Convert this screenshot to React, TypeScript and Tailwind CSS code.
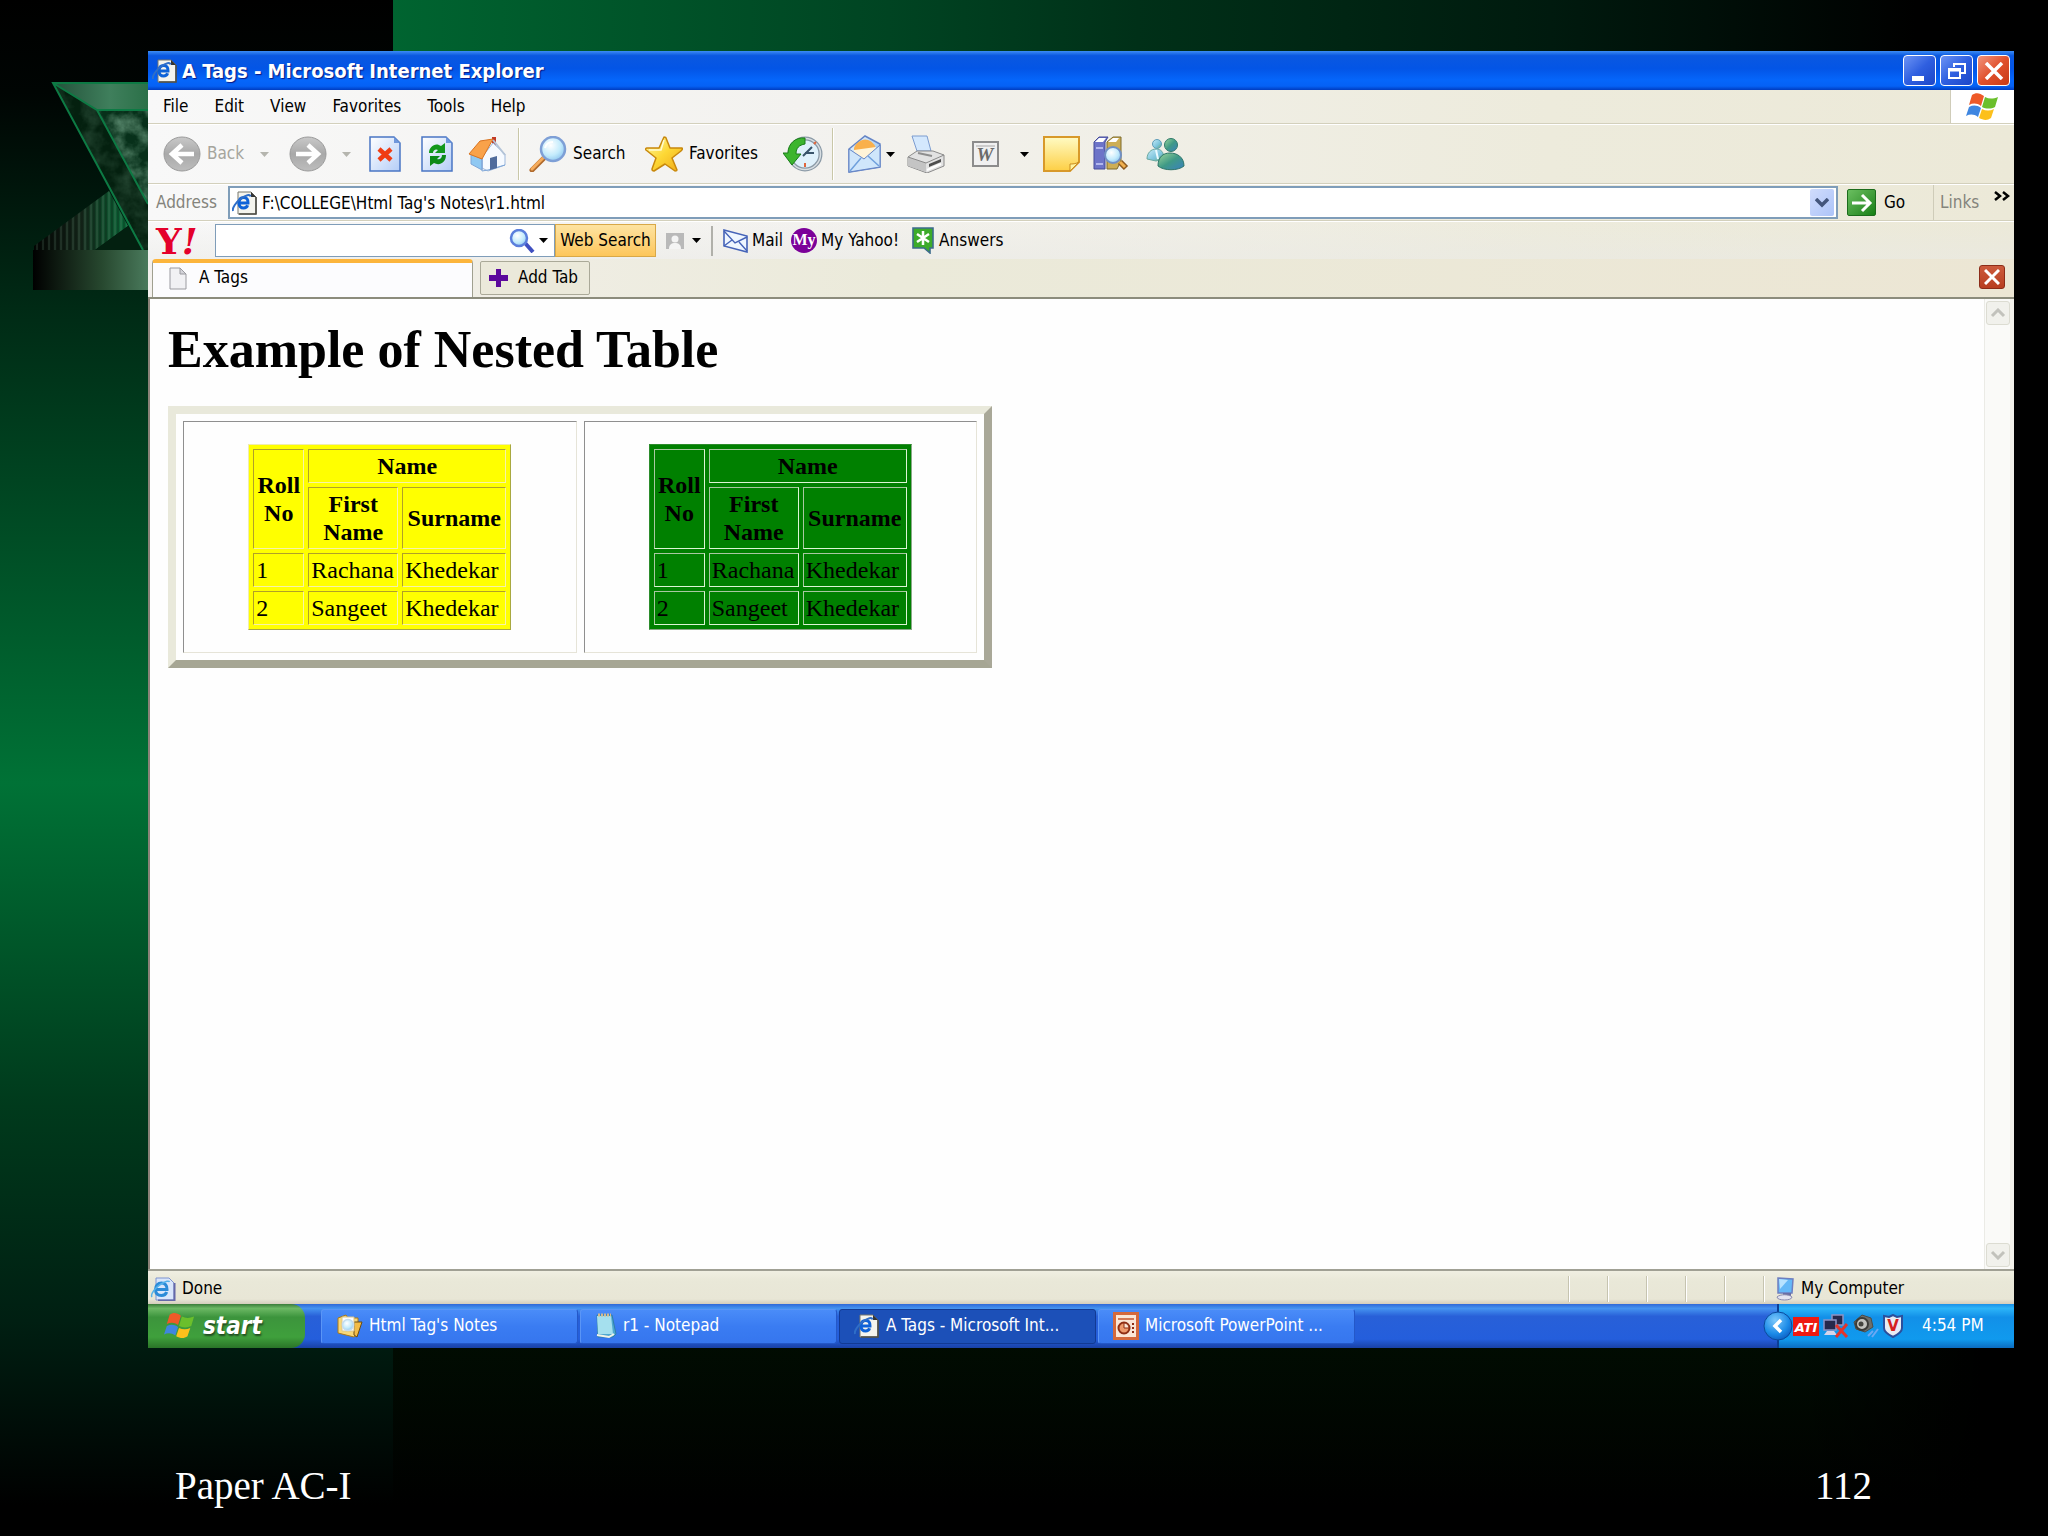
import type { ReactNode } from "react";

const ui = "font-['DejaVu_Sans_Condensed','DejaVu_Sans',sans-serif]";

/* Gradients shared by the icons */
const Defs = () => (
  <svg width="0" height="0" className="absolute" aria-hidden="true">
    <defs>
      <linearGradient id="gray" x1="0" y1="0" x2="0" y2="1">
        <stop offset="0" stopColor="#c9c9c9" />
        <stop offset="0.5" stopColor="#a9a9a9" />
        <stop offset="1" stopColor="#bdbdbd" />
      </linearGradient>
      <linearGradient id="page" x1="0" y1="0" x2="1" y2="1">
        <stop offset="0" stopColor="#ffffff" />
        <stop offset="1" stopColor="#b4cdf7" />
      </linearGradient>
      <radialGradient id="lens" cx="0.4" cy="0.35" r="0.7">
        <stop offset="0" stopColor="#ffffff" />
        <stop offset="0.6" stopColor="#c3ebfc" />
        <stop offset="1" stopColor="#8cc4ee" />
      </radialGradient>
      <linearGradient id="gold" x1="0" y1="0" x2="1" y2="1">
        <stop offset="0" stopColor="#fff9b0" />
        <stop offset="0.5" stopColor="#fdd835" />
        <stop offset="1" stopColor="#f0a818" />
      </linearGradient>
      <linearGradient id="sky" x1="0" y1="0" x2="1" y2="1">
        <stop offset="0" stopColor="#f2faff" />
        <stop offset="1" stopColor="#7db4ea" />
      </linearGradient>
      <linearGradient id="teal" x1="0" y1="0" x2="1" y2="1">
        <stop offset="0" stopColor="#9ed69a" />
        <stop offset="0.5" stopColor="#3f9a86" />
        <stop offset="1" stopColor="#3a7fc0" />
      </linearGradient>
      <linearGradient id="aqua" x1="0" y1="0" x2="1" y2="1">
        <stop offset="0" stopColor="#c8ecf8" />
        <stop offset="0.6" stopColor="#7cc4dc" />
        <stop offset="1" stopColor="#6aa86a" />
      </linearGradient>
      <linearGradient id="note" x1="0" y1="0" x2="0" y2="1">
        <stop offset="0" stopColor="#fffbc4" />
        <stop offset="1" stopColor="#fdcf45" />
      </linearGradient>
      <radialGradient id="tray" cx="0.4" cy="0.3" r="0.8">
        <stop offset="0" stopColor="#7cc8fb" />
        <stop offset="0.6" stopColor="#1b8be8" />
        <stop offset="1" stopColor="#0b53b8" />
      </radialGradient>
    </defs>
  </svg>
);

const Svg = ({ w, h, box, children }: { w: number; h: number; box?: string; children: ReactNode }) => (
  <svg width={w} height={h} viewBox={box ?? `0 0 ${w} ${h}`} fill="none" className="shrink-0" aria-hidden="true">
    {children}
  </svg>
);

const IePage = () => (
  <Svg w={26} h={24}>
    <path d="M6 1h13l5 5v17H6z" fill="#f4f4ee" stroke="#77776c" />
    <path d="M24 6v17H7" stroke="#4d4d46" strokeWidth="1.6" />
    <path d="M19 1v5h5z" fill="#333" />
    <path d="M16 12H7c0-3.500 2-5.500 4.800-5.500S16.200 8.500 16 12zM7 12c0 3 1.800 5 4.600 5 2 0 3.400-1 4-2.800" stroke="#0d62d8" strokeWidth="3" />
    <path d="M1 20C0 17 4 11 9 7.500S18 3 18.500 5.500" stroke="#2f6ec8" strokeWidth="2" />
  </Svg>
);

const IeStatus = () => (
  <Svg w={26} h={24}>
    <path d="M6 1h13l5 5v17H6z" fill="#d9e6fb" stroke="#7f94d0" />
    <path d="M24.500 6v17.500H8" stroke="#6568a8" strokeWidth="2" />
    <path d="M17 12.500H5.500c0-4 2.500-6.500 6-6.500s5.700 2.700 5.500 6.500zM5.500 12.500c0 4 2.500 6 6 6 2.500 0 4.400-1.200 5.200-3.500" stroke="#2b8bd8" strokeWidth="3" />
    <path d="M2 20c-2-3 4-10 9-13s8-3.500 8.500-2" stroke="#53b2ea" strokeWidth="1.500" />
  </Svg>
);

const NavArrow = ({ back }: { back?: boolean }) => (
  <Svg w={38} h={36}>
    <ellipse cx="19" cy="18" rx="18" ry="17" fill="url(#gray)" stroke="#9b9b9b" />
    <path
      d={back ? "M31 18H10M19 9l-10 9 10 9" : "M7 18h21M19 9l10 9-10 9"}
      stroke="#fff"
      strokeWidth="4.500"
    />
  </Svg>
);

const Stop = () => (
  <Svg w={32} h={36}>
    <path d="M1 1h24l6 6v28H1z" fill="url(#page)" stroke="#4a76c4" strokeWidth="1.500" />
    <path d="M25 1v6h6z" fill="#6f97dc" />
    <path d="M10 13l12 11M22 13L10 24" stroke="#f03c12" strokeWidth="4.500" />
  </Svg>
);

const Refresh = () => (
  <Svg w={32} h={36}>
    <path d="M1 1h24l6 6v28H1z" fill="url(#page)" stroke="#4a76c4" strokeWidth="1.500" />
    <path d="M25 1v6h6z" fill="#6f97dc" />
    <path d="M8 17c0-7 7-11 12-7l4-3v10H14l3-3c-2-1.500-5 0-5 3z" fill="#12981c" />
    <path d="M25 19c0 8-7 11-12 8l-4 3V20h10l-3 3c3 1 5-1 5-4z" fill="#0c8a18" />
  </Svg>
);

const Home = () => (
  <Svg w={38} h={36}>
    <path d="M24 1h4v10h-4z" fill="#c23a26" />
    <path d="M14 21L25 7l12 11v11l-17 6-6-3z" fill="#f6faff" stroke="#9db8dc" />
    <path d="M3 18l11 5v11L3 28z" fill="#8fc8f2" stroke="#7ea6d8" />
    <path d="M14 22v13l6-1 17-5" stroke="#7ea6d8" />
    <path d="M1 18L12 5l13-2-11 20z" fill="#f9a24a" stroke="#d97320" />
    <path d="M25 4l12 15" stroke="#b4c4d8" strokeWidth="2" />
    <path d="M22 22l7-2v12l-7 2z" fill="#506c9c" />
  </Svg>
);

const Magnifier = () => (
  <Svg w={38} h={36}>
    <path d="M15 22L3 34" stroke="#b06a2c" strokeWidth="5" strokeLinecap="round" />
    <path d="M15 21L3 33" stroke="#f6ac5c" strokeWidth="3" strokeLinecap="round" />
    <circle cx="24" cy="13" r="12" fill="url(#lens)" stroke="#7e9fd6" strokeWidth="2.500" />
    <path d="M16 12c1-4 4-6 8-6" stroke="#fff" strokeWidth="2" />
  </Svg>
);

const Star = () => (
  <Svg w={38} h={36}>
    <path
      d="M19 1c1 0 2 0 2 1l4 10 12 0c1 1 0 2-1 3l-9 7 5 12c0 1-1 1-2 1l-10-7-11 7c-2 0-2-1-2-2l4-11L1 14c-1-1 0-2 1-2h12z"
      fill="url(#gold)"
      stroke="#c8880c"
      strokeWidth="1.500"
      strokeLinejoin="round"
    />
    <path d="M19 4l-3 10-12 0" stroke="#fffbd0" strokeWidth="1.500" />
  </Svg>
);

const History = () => (
  <Svg w={40} h={36}>
    <circle cx="22" cy="18" r="15.500" fill="#dff1fb" stroke="#8b9aa6" strokeWidth="4" />
    <circle cx="22" cy="18" r="15.500" stroke="#d8dee2" strokeWidth="1.500" />
    <path d="M20 20l9-9M22 17h9" stroke="#39546a" strokeWidth="2" />
    <path d="M22 27v4M31 8l2-2" stroke="#e0663c" strokeWidth="2" />
    <path d="M22 2C12 1 5 8 5 17H0l9 12 9-11h-5c0-6 3-9 9-10z" fill="#3cb52e" stroke="#1a7d18" />
  </Svg>
);

const MailOpen = () => (
  <Svg w={34} h={38}>
    <path d="M1 14L17 1l15 8v23L1 37z" fill="url(#sky)" stroke="#6585c6" strokeWidth="1.500" />
    <path d="M6 13c2-6 9-10 14-8s8 6 8 10l-10 4L6 17z" fill="#f9b04c" />
    <path d="M6 15l22-3v7l-12 5-10-5z" fill="#fff4d8" />
    <path d="M1 14l15 10 16-14v22L1 37z" fill="#cfe6fb" stroke="#6585c6" />
    <path d="M2 36l11-13M31 31L20 21" stroke="#6fa0dc" strokeWidth="1.500" />
  </Svg>
);

const Printer = () => (
  <Svg w={38} h={38}>
    <path d="M5 1h15l4 15H10z" fill="#d4e8fd" stroke="#7c9cd0" />
    <path d="M1 22l9-6h16l11 4v11l-17 7L1 31z" fill="#e2e2e2" stroke="#8a8a8a" />
    <path d="M1 22l18 6v9L1 31z" fill="#c4c4c4" />
    <path d="M1 22l18 6 18-8" stroke="#8a8a8a" />
    <path d="M22 29l12-5v3l-12 5z" fill="#4d4d4d" />
    <path d="M20 35l14-6" stroke="#fff" strokeWidth="2" />
    <path d="M11 18l14 3" stroke="#8e8e8e" strokeWidth="2" />
  </Svg>
);

const Word = () => (
  <Svg w={27} h={26}>
    <rect x="1" y="1" width="25" height="24" fill="#f0f0f0" stroke="#8c8c8c" strokeWidth="2" />
    <path d="M4 4h19v2H4z" fill="#ccc" />
    <text x="13" y="20" textAnchor="middle" fontFamily="Liberation Serif" fontWeight="bold" fontStyle="italic" fontSize="19" fill="#6b6b6b">W</text>
  </Svg>
);

const Note = () => (
  <Svg w={37} h={36}>
    <path d="M1 1h35v25l-9 9H1z" fill="url(#note)" stroke="#d8992a" strokeWidth="2" />
    <path d="M27 35v-7c2 0 6 0 9-2z" fill="#fff3a0" stroke="#c98c20" />
  </Svg>
);

const Books = () => (
  <Svg w={36} h={36}>
    <path d="M1 6l5-5h9l-3 5v27H1z" fill="#6d74c8" stroke="#444a98" />
    <path d="M14 6l6-5h8v24l-4 8H14z" fill="#cdae55" stroke="#7d6a2c" />
    <path d="M2 6l4-4h7l-3 4zM15 6l5-4h6l-3 4z" fill="#fff" />
    <path d="M3 12h7M3 28h7" stroke="#b3b8ee" strokeWidth="2" />
    <path d="M27 26l6 6" stroke="#8c5a20" strokeWidth="6" />
    <path d="M27 26l5 5" stroke="#f0b050" strokeWidth="3" />
    <circle cx="20" cy="19" r="8" fill="url(#lens)" stroke="#7190c4" strokeWidth="2" />
  </Svg>
);

const Messenger = () => (
  <Svg w={39} h={34}>
    <circle cx="11" cy="7" r="4.500" fill="url(#aqua)" stroke="#5f9db8" />
    <path d="M1 22c0-6 4-10 9-10s8 3 8 10l-8 2z" fill="url(#aqua)" stroke="#6aa9a0" />
    <path d="M10 13l2 9" stroke="#eafaff" strokeWidth="2" />
    <circle cx="25" cy="8" r="6.500" fill="url(#teal)" stroke="#2f7a6a" />
    <path d="M12 29c0-9 5-13 12-13s14 4 14 13c-6 5-20 5-26 0z" fill="url(#teal)" stroke="#2c7468" />
  </Svg>
);

const Flag = ({ w, h }: { w: number; h: number }) => (
  <Svg w={w} h={h} box="0 0 33 28">
    <path d="M6 2c4-3 8-2 12 1l-3 10c-4-3-8-3-12-1z" fill="#ee5a28" />
    <path d="M19 4c4 2 8 2 13 0l-3 10c-4 2-9 2-13 0z" fill="#6bbf2c" />
    <path d="M3 14c4-2 8-2 12 1l-3 9c-4-3-8-3-12-1z" fill="#3f86e0" />
    <path d="M16 16c4 2 8 2 12 0l-3 9c-4 3-8 2-12 0z" fill="#fcc01c" />
  </Svg>
);

const SmallLens = () => (
  <Svg w={26} h={24}>
    <path d="M16 14l8 9" stroke="#3f4fc0" strokeWidth="4" />
    <circle cx="10" cy="9" r="8" fill="url(#lens)" stroke="#5b7fdc" strokeWidth="2.500" />
  </Svg>
);

const Caret = ({ color = "#000" }: { color?: string }) => (
  <Svg w={9} h={5}>
    <path d="M0 0h9L4.500 5z" fill={color} />
  </Svg>
);

const Avatar = () => (
  <Svg w={18} h={16}>
    <rect width="18" height="16" fill="#b9b9b9" />
    <circle cx="9" cy="6" r="3.500" fill="#f4f4f4" />
    <path d="M3 16c0-5 3-6 6-6s6 1 6 6z" fill="#f4f4f4" />
  </Svg>
);

const MailClosed = () => (
  <Svg w={25} h={24}>
    <path d="M1 1l23 6v16L1 17z" fill="#eef6ff" stroke="#4563b8" strokeWidth="1.600" />
    <path d="M1 2l11 12L24 8M1 17l8-6M24 22l-8-9" stroke="#4563b8" strokeWidth="1.400" />
  </Svg>
);

const MyBadge = () => (
  <Svg w={26} h={25}>
    <ellipse cx="13" cy="12.500" rx="13" ry="12.500" fill="#7b0099" />
    <text x="13" y="17" textAnchor="middle" fontFamily="Liberation Serif" fontWeight="bold" fontSize="16" fill="#fff">My</text>
  </Svg>
);

const AnswersIcon = () => (
  <Svg w={24} h={27}>
    <path d="M2 1h20v20h-3v5l-6-5H2z" fill="#3cab2a" stroke="#3c6b8c" strokeWidth="1.600" />
    <path d="M12 4v14M6 7l12 8M18 7L6 15" stroke="#fff" strokeWidth="2.500" />
  </Svg>
);

const BlankPage = () => (
  <Svg w={18} h={23}>
    <path d="M1 1h10l6 6v15H1z" fill="#f1f1f4" stroke="#9a9aa0" />
    <path d="M11 1v6h6z" fill="#d4d4da" stroke="#9a9aa0" />
  </Svg>
);

const Folder = () => (
  <Svg w={27} h={26}>
    <path d="M2 5l8-3 2 3h10v16l-4 3L2 20z" fill="#f8d778" stroke="#a87818" />
    <path d="M18 9h8l-5 15-3-2z" fill="#f3bc48" stroke="#6c4c10" />
    <path d="M6 4h12v14H6z" fill="#fff" stroke="#d8c48c" />
    <circle cx="12" cy="12" r="5.500" fill="url(#lens)" stroke="#c4dcf0" strokeWidth="1.500" />
  </Svg>
);

const Notepad = () => (
  <Svg w={22} h={26}>
    <path d="M2 2h15l4 19-3 3H3z" fill="#4fa8d0" stroke="#2f7fa8" />
    <path d="M2 3h14l2 18H3z" fill="#a5e0ee" />
    <path d="M3 2h13" stroke="#d6b98c" strokeWidth="3" strokeDasharray="2 1" />
    <path d="M2 22l12 2 5-3" stroke="#f2f2e6" strokeWidth="2" />
  </Svg>
);

const PowerPoint = () => (
  <Svg w={26} h={28}>
    <rect x="1" y="1" width="24" height="26" fill="#fbe6d6" stroke="#d4693c" strokeWidth="4" />
    <path d="M5 7h16" stroke="#c4532a" strokeWidth="1.500" />
    <circle cx="11" cy="16" r="5.500" fill="#ee9a6c" stroke="#8e2e14" strokeWidth="2" />
    <path d="M11 16v-5a5 5 0 0 1 5 5z" fill="#fbe6d6" stroke="#8e2e14" />
    <path d="M20 11v10" stroke="#8e2e14" strokeWidth="2" strokeDasharray="2 2" />
  </Svg>
);

const Computer = () => (
  <Svg w={20} h={24}>
    <path d="M3 1l15 1-1 14H3z" fill="#64b8f8" stroke="#6d7fc0" strokeWidth="1.500" />
    <path d="M4 2l9 1-8 9z" fill="#b8e2ff" />
    <path d="M8 16h8v3H8z" fill="#6a6ea4" />
    <path d="M2 20c3-3 12-3 15 0 0 4-15 4-15 0z" fill="#e4e4f0" stroke="#8a8aae" />
  </Svg>
);

const AtiIcon = () => (
  <Svg w={26} h={19}>
    <rect width="26" height="19" fill="#ee1a10" />
    <text x="13" y="15" textAnchor="middle" fontFamily="DejaVu Sans" fontWeight="bold" fontStyle="italic" fontSize="13" fill="#fff">ATI</text>
  </Svg>
);

const Network = () => (
  <Svg w={28} h={24}>
    <rect x="10" y="1" width="11" height="10" fill="#26284c" stroke="#8f93c4" strokeWidth="1.500" />
    <rect x="2" y="6" width="12" height="10" fill="#26284c" stroke="#8f93c4" strokeWidth="1.500" />
    <path d="M2 21l3-4h7l3 4z" fill="#d4d4ea" />
    <path d="M14 11l11 12M25 10L14 23" stroke="#e2342c" strokeWidth="3" />
  </Svg>
);

const Speaker = () => (
  <Svg w={27} h={24}>
    <path d="M1 8l8-7 9 3 2 9-8 5-9-3z" fill="#6f6f6a" stroke="#4c4c48" />
    <circle cx="9" cy="10" r="6" fill="#c4c4be" stroke="#3c3c38" strokeWidth="2" />
    <circle cx="8" cy="10" r="2.500" fill="#44443e" />
    <path d="M15 22l5-5M19 23l6-8" stroke="#6aa8f4" strokeWidth="2" />
  </Svg>
);

const Shield = () => (
  <Svg w={20} h={24}>
    <path d="M1 2l5 1 4-2 4 2 5-1v12c0 4-5 7-9 9-4-2-9-5-9-9z" fill="#e8ecf4" stroke="#2b4f9c" strokeWidth="2" />
    <text x="10" y="17" textAnchor="middle" fontFamily="DejaVu Sans" fontWeight="bold" fontSize="15" fill="#d42020">V</text>
  </Svg>
);

/* Slide artwork behind the browser window */
const SlideArt = () => (
  <svg width="148" height="300" viewBox="0 0 148 300" className="absolute top-0 left-0" aria-hidden="true">
    <defs>
      <linearGradient id="bar" x1="0" x2="1">
        <stop offset="0" stopColor="#000" />
        <stop offset="0.6" stopColor="#27482f" />
        <stop offset="1" stopColor="#4a7a5c" />
      </linearGradient>
      <linearGradient id="strip" x1="0" x2="1">
        <stop offset="0" stopColor="#020503" />
        <stop offset="0.5" stopColor="#16291c" />
        <stop offset="1" stopColor="#0c6b3a" />
      </linearGradient>
      <linearGradient id="rim" x1="0" x2="1">
        <stop offset="0" stopColor="#23513a" />
        <stop offset="0.600" stopColor="#3f7f5c" />
        <stop offset="1" stopColor="#2b7048" />
      </linearGradient>
      <pattern id="lines" width="6" height="10" patternUnits="userSpaceOnUse">
        <path d="M1 0v10" stroke="#6f9a80" strokeWidth="1" opacity="0.350" />
        <path d="M4 0v10" stroke="#000" strokeWidth="1" opacity="0.400" />
      </pattern>
      <filter id="marble" x="0" y="0" width="1" height="1">
        <feTurbulence type="fractalNoise" baseFrequency="0.06" numOctaves="4" seed="8" />
        <feColorMatrix values="0 0 0 0 0.200  0 0 0 0 0.420  0 0 0 0 0.280  1.800 0 0 0 -0.600" />
        <feComposite in2="SourceGraphic" operator="in" />
      </filter>
    </defs>
    <path d="M34 246l75-55 19 35-33 24H34z" fill="url(#strip)" />
    <path d="M34 246l75-55 19 35-33 24H34z" fill="url(#lines)" />
    <path d="M95 250l33-24 15 24z" fill="#032010" />
    <path d="M53 83h95v167h-5z" fill="#04200f" />
    <path d="M97 110h51v94z" fill="#07301a" />
    <path d="M97 110h51v94z" fill="#fff" filter="url(#marble)" opacity="0.700" />
    <path d="M53 83l44 27 51 94v46h-5z" fill="#fff" filter="url(#marble)" opacity="0.250" />
    <path d="M53 83h95v27H97z" fill="url(#rim)" />
    <path d="M148 83H53l90 167M53 83l44 27h51M97 110l51 94" fill="none" stroke="#0d7a44" strokeWidth="2" />
    <path d="M33 250h115v40H33z" fill="url(#bar)" />
  </svg>
);

const Separator = () => <span className="h-[52px] w-[2px] shrink-0 border-l border-[#c9c7a8] bg-white" />;

const Tool = ({ label, className, children }: { label: string; className: string; children: ReactNode }) => (
  <button type="button" aria-label={label} className={`flex h-full shrink-0 items-center ${className}`}>
    {children}
  </button>
);

const caption = "border border-white rounded-[4px] flex h-[31px] w-[33px] items-center justify-center";

const menus = ["File", "Edit", "View", "Favorites", "Tools", "Help"];

const students = [
  ["1", "Rachana", "Khedekar"],
  ["2", "Sangeet", "Khedekar"],
];

const NestedTable = ({ table, cell }: { table: string; cell: string }) => (
  <table className={`mx-auto w-[263px] table-fixed border-separate border-spacing-[4px] border ${table}`}>
    <colgroup>
      <col className="w-[51px]" />
      <col className="w-[90px]" />
      <col />
    </colgroup>
    <thead>
      <tr>
        <th rowSpan={2} className={`border leading-7 ${cell}`}>Roll No</th>
        <th colSpan={2} className={`h-[34px] border leading-7 ${cell}`}>Name</th>
      </tr>
      <tr>
        <th className={`h-[62px] border leading-7 ${cell}`}>First Name</th>
        <th className={`border leading-7 ${cell}`}>Surname</th>
      </tr>
    </thead>
    <tbody>
      {students.map(([roll, first, last]) => (
        <tr key={roll}>
          <td className={`h-[34px] border px-[2px] leading-7 ${cell}`}>{roll}</td>
          <td className={`border px-[2px] leading-7 ${cell}`}>{first}</td>
          <td className={`border px-[2px] leading-7 ${cell}`}>{last}</td>
        </tr>
      ))}
    </tbody>
  </table>
);

const TitleBar = () => (
  <header className="flex h-[39px] items-center bg-[linear-gradient(to_bottom,#3c8cf4_0%,#0a58e0_12%,#0355e6_45%,#0566fb_75%,#0561f5_90%,#003cc0_100%)] pl-1 pr-1">
    <IePage />
    <h2 className="ml-1 flex-1 text-[20px] font-bold text-white [text-shadow:1px_1px_1px_#0a1883]">
      A Tags - Microsoft Internet Explorer
    </h2>
    <div className="flex gap-1">
      <button type="button" aria-label="Minimize" className={`${caption} bg-linear-to-br from-[#6d93f4] via-[#2f5fe0] to-[#1c46c8]`}>
        <Svg w={24} h={24}><path d="M4 17h12v5H4z" fill="#fff" /></Svg>
      </button>
      <button type="button" aria-label="Restore" className={`${caption} bg-linear-to-br from-[#6d93f4] via-[#2f5fe0] to-[#1c46c8]`}>
        <Svg w={20} h={18}>
          <path d="M7 5V2h11v9h-4" stroke="#fff" strokeWidth="2" />
          <path d="M2 7h11v9H2zM2 8.500h11" stroke="#fff" strokeWidth="2" />
        </Svg>
      </button>
      <button type="button" aria-label="Close" className={`${caption} bg-linear-to-br from-[#f0937a] via-[#e0502c] to-[#c83a14]`}>
        <Svg w={20} h={18}><path d="M2 1l16 16M18 1L2 17" stroke="#fff" strokeWidth="3.500" /></Svg>
      </button>
    </div>
  </header>
);

const MenuBar = () => (
  <nav className="flex h-[34px] items-stretch border-b border-[#d3d0bc]">
    <ul className="flex flex-1 items-center gap-[26px] pl-[15px]">
      {menus.map((m) => (
        <li key={m}><button type="button">{m}</button></li>
      ))}
    </ul>
    <div className="flex w-[64px] items-center justify-center border-l border-[#cfccb9] bg-white">
      <Flag w={33} h={28} />
    </div>
  </nav>
);

const Toolbar = () => (
  <div className="flex h-[60px] items-center border-t border-b border-t-white border-b-[#d3d0bc] pl-3">
    <Tool label="Back" className="w-[92px] gap-[6px] pl-[3px] text-[#a5a59d]"><NavArrow back /><span>Back</span></Tool>
    <Tool label="Back history" className="w-6 justify-center"><Caret color="#b5b5ae" /></Tool>
    <Tool label="Forward" className="w-16 justify-center"><NavArrow /></Tool>
    <Tool label="Forward history" className="w-3 justify-center"><Caret color="#b5b5ae" /></Tool>
    <Tool label="Stop" className="w-[66px] justify-center"><Stop /></Tool>
    <Tool label="Refresh" className="w-[38px] justify-center"><Refresh /></Tool>
    <Tool label="Home" className="w-[62px] justify-center"><Home /></Tool>
    <Separator />
    <Tool label="Search" className="w-[116px] gap-[6px] pl-[9px]"><Magnifier /><span>Search</span></Tool>
    <Tool label="Favorites" className="w-[138px] gap-[6px] pl-[9px]"><Star /><span>Favorites</span></Tool>
    <Tool label="History" className="w-[58px] justify-center"><History /></Tool>
    <Separator />
    <Tool label="Mail" className="w-12 justify-end"><MailOpen /></Tool>
    <Tool label="Mail options" className="w-4 justify-center"><Caret /></Tool>
    <Tool label="Print" className="w-14 justify-center"><Printer /></Tool>
    <Tool label="Edit" className="w-[62px] justify-center"><Word /></Tool>
    <Tool label="Edit options" className="w-4 justify-center"><Caret /></Tool>
    <Tool label="Discuss" className="w-[58px] justify-center"><Note /></Tool>
    <Tool label="Research" className="w-[42px] justify-center"><Books /></Tool>
    <Tool label="Messenger" className="w-[66px] justify-center"><Messenger /></Tool>
  </div>
);

const AddressBar = () => (
  <div className="flex h-[37px] items-center border-t border-b border-t-white border-b-[#d3d0bc]">
    <label htmlFor="address" className="w-[80px] pl-2 text-[#84847c]">Address</label>
    <div className="flex h-[33px] flex-1 items-center border-2 border-[#7f9db9] bg-white pr-[2px] pl-[2px]">
      <IePage />
      <input
        id="address"
        defaultValue="F:\COLLEGE\Html Tag's Notes\r1.html"
        className="h-full flex-1 bg-transparent pl-1 outline-none"
      />
      <button type="button" aria-label="Show addresses" className="flex h-[27px] w-6 items-center justify-center rounded-[2px] bg-linear-to-br from-[#d0dcfc] to-[#adc4f8]">
        <Svg w={14} h={10}><path d="M1 1l6 6 6-6" stroke="#44567c" strokeWidth="3.500" /></Svg>
      </button>
    </div>
    <button type="button" className="flex w-[95px] items-center gap-2 pl-[9px]">
      <span className="flex h-[27px] w-[29px] items-center justify-center rounded-[2px] border border-[#1c6c1c] bg-linear-to-br from-[#6abf60] to-[#128012]">
        <Svg w={22} h={20}><path d="M1 10h18M11 2l8 8-8 8" stroke="#fff" strokeWidth="3" /></Svg>
      </span>
      Go
    </button>
    <div className="flex h-full w-[81px] items-start justify-between border-l border-[#cfccb9] pr-1 pl-[6px]">
      <span className="self-center text-[#84847c]">Links</span>
      <button type="button" aria-label="More links" className="pt-[6px]">
        <Svg w={16} h={10}><path d="M1 1l5 4-5 4M9 1l5 4-5 4" stroke="#000" strokeWidth="2.500" /></Svg>
      </button>
    </div>
  </div>
);

const YahooBar = () => (
  <div className="flex h-[38px] items-center border-t border-white bg-[linear-gradient(to_bottom,#f8f8f700,#e9e9e580)] pl-2">
    <div className="w-[59px] font-['DejaVu_Serif',serif] text-[36px] leading-8 font-bold text-[#e4002b]">
      Y<span className="italic">!</span>
    </div>
    <div className="flex h-[33px] w-[340px] items-center gap-1 border border-[#7f9db9] bg-white pr-[6px]">
      <input aria-label="Search the web" className="h-full min-w-0 flex-1 bg-transparent px-2 outline-none" />
      <SmallLens />
      <Caret />
    </div>
    <button type="button" className="h-[33px] w-[101px] border border-[#d8a848] bg-linear-to-b from-[#fde3a0] to-[#fdc65a] whitespace-nowrap">
      Web Search
    </button>
    <button type="button" aria-label="Account" className="flex w-[55px] items-center justify-center gap-2"><Avatar /><Caret /></button>
    <span className="h-[30px] w-[2px] bg-[#b0b0aa]" />
    <nav className="flex items-center gap-2 pl-[10px]">
      <a href="#mail" className="flex items-center gap-1"><MailClosed />Mail</a>
      <a href="#my" className="flex items-center gap-1"><MyBadge />My Yahoo!</a>
      <a href="#answers" className="flex items-center gap-1 pl-1"><AnswersIcon />Answers</a>
    </nav>
  </div>
);

const TabBar = () => (
  <div className="flex h-[40px] items-end border-b-2 border-[#8c8c7c] bg-[linear-gradient(to_right,#f4f1ee,#ebeada_40%,#ece6d4)] pl-1">
    <button type="button" className="flex h-[38px] w-[321px] items-center gap-3 rounded-t-[4px] border border-t-4 border-[#a0a090] border-t-[#fcb53c] border-b-0 bg-[#fcfcfe] pb-1 pl-4">
      <BlankPage />A Tags
    </button>
    <button type="button" className="mb-[2px] ml-[7px] flex h-[34px] w-[110px] items-center gap-[10px] rounded-[2px] border border-[#aaa998] bg-[#ebe9da] pl-2 whitespace-nowrap">
      <Svg w={19} h={18}><path d="M7 0h5v6h7v6h-7v6H7v-6H0V6h7z" fill="#5c0a9c" /></Svg>
      Add Tab
    </button>
    <button type="button" aria-label="Close tab" className="mr-[9px] mb-2 ml-auto flex h-6 w-[26px] items-center justify-center rounded-[3px] border border-[#8c2c18] bg-linear-to-b from-[#cc5a3c] to-[#b83e20]">
      <Svg w={16} h={16}><path d="M1 1l14 14M15 1L1 15" stroke="#fff" strokeWidth="3" /></Svg>
    </button>
  </div>
);

const ScrollButton = ({ label, d }: { label: string; d: string }) => (
  <button type="button" aria-label={label} className="flex h-6 w-6 items-center justify-center rounded-[3px] border border-[#dcdcd2] bg-[#f1f1ec]">
    <Svg w={16} h={10}><path d={d} stroke="#c2c2bc" strokeWidth="3" /></Svg>
  </button>
);

const Page = () => (
  <div className="flex flex-1 border-r-4 border-l-2 border-r-[#f2f1ea] border-l-[#8a8278] bg-[#fefefe]">
    <main className="flex-1 pt-[22px] pl-[18px] font-['Liberation_Serif',serif] text-[24px] text-black">
      <h1 className="text-[52px] leading-[58px] font-bold">Example of Nested Table</h1>
      <table className="mt-[27px] h-[262px] w-[824px] border-separate border-spacing-[7px] border-8 border-t-[#e9e9db] border-r-[#a9a898] border-b-[#a6a694] border-l-[#e9e9db]">
        <tbody>
          <tr>
            <td className="border border-t-[#8f8f8f] border-r-[#e6e4d8] border-b-[#e6e4d8] border-l-[#8f8f8f]">
              <NestedTable
                table="bg-[#ffff00] border-t-[#f0ecb0] border-l-[#f0ecb0] border-r-[#a8a840] border-b-[#a8a840]"
                cell="border-t-[#b0a028] border-l-[#b0a028] border-r-[#f6f2a8] border-b-[#f6f2a8]"
              />
            </td>
            <td className="border border-t-[#8f8f8f] border-r-[#e6e4d8] border-b-[#e6e4d8] border-l-[#8f8f8f]">
              <NestedTable
                table="bg-[#008000] border-t-[#2c8c2c] border-l-[#2c8c2c] border-r-[#8ba888] border-b-[#8ba888]"
                cell="border-t-[#a8c8a0] border-l-[#a8c8a0] border-r-[#dcf5d4] border-b-[#dcf5d4]"
              />
            </td>
          </tr>
        </tbody>
      </table>
    </main>
    <div className="flex w-[26px] flex-col items-center justify-between border-l border-[#ebebe6] bg-[#fafaf8] py-[2px]">
      <ScrollButton label="Scroll up" d="M2 8l6-6 6 6" />
      <ScrollButton label="Scroll down" d="M2 2l6 6 6-6" />
    </div>
  </div>
);

const StatusBar = () => (
  <div className="flex h-[35px] items-center border-t-2 border-[#a0a094] bg-[linear-gradient(to_bottom,#f0efe2,#e9e8d8_30%,#e8e6d6_85%,#d4cdbc)] pt-[2px] pl-[2px]">
    <IeStatus />
    <span className="flex-1 pl-[6px]">Done</span>
    {[0, 1, 2, 3, 4].map((n) => (
      <span key={n} className="h-[26px] w-[39px] border-l border-[#c6c4b0] shadow-[inset_1px_0_0_#fff]" />
    ))}
    <span className="flex h-[26px] w-[251px] items-center gap-[6px] border-l border-[#c6c4b0] pl-[11px] shadow-[inset_1px_0_0_#fff]">
      <Computer />My Computer
    </span>
  </div>
);

const Task = ({ icon, children, active }: { icon: ReactNode; children: ReactNode; active?: boolean }) => (
  <button
    type="button"
    className={`flex h-[35px] w-[257px] items-center gap-[6px] rounded-[3px] border pl-[14px] whitespace-nowrap text-white ${
      active
        ? "border-[#123a94] bg-[#1c50b8]"
        : "border-[#5a95f6] border-r-[#2458c8] border-b-[#2458c8] bg-linear-to-b from-[#4a8cf8] via-[#3a7cf2] to-[#3676ee]"
    }`}
  >
    {icon}
    {children}
  </button>
);

const TaskBar = () => (
  <footer className="flex h-[44px] items-stretch bg-[linear-gradient(to_bottom,#2f68d8_0%,#4593f0_10%,#2860d8_28%,#245edc_80%,#1941a5_100%)]">
    <button
      type="button"
      className="flex w-[157px] items-center gap-2 rounded-r-[14px] bg-[linear-gradient(to_bottom,#3a7c3a_0%,#6cb864_10%,#3c943c_30%,#3fa03c_75%,#2a7428_100%)] pl-4 text-[24px] font-bold text-white italic [text-shadow:1px_2px_2px_#204a20]"
    >
      <Flag w={31} h={28} />start
    </button>
    <div className="flex flex-1 items-center gap-[2px] pl-4">
      <Task icon={<Folder />}>Html Tag's Notes</Task>
      <Task icon={<Notepad />}>r1 - Notepad</Task>
      <Task icon={<IePage />} active>A Tags - Microsoft Int...</Task>
      <Task icon={<PowerPoint />}>Microsoft PowerPoint ...</Task>
    </div>
    <div className="flex w-[237px] items-center border-l-2 border-[#0c3f94] bg-[linear-gradient(to_bottom,#1a90e8_0%,#2cb4f8_10%,#1290e8_30%,#109aee_80%,#0c6cc0_100%)] text-white">
      <button type="button" aria-label="Show hidden icons" className="-ml-4">
        <Svg w={30} h={30}>
          <circle cx="15" cy="15" r="14" fill="url(#tray)" stroke="#0b4a9c" />
          <path d="M18 9l-6 6 6 6" stroke="#fff" strokeWidth="3.500" />
        </Svg>
      </button>
      <div className="flex flex-1 items-center gap-[3px]">
        <AtiIcon /><Network /><Speaker /><Shield />
      </div>
      <time className="w-[92px] whitespace-nowrap">4:54 PM</time>
    </div>
  </footer>
);

const App = () => (
  <div className="relative flex min-h-screen flex-col bg-black pt-[51px]">
    <Defs />
    <div className="absolute inset-0 flex">
      <div className="w-[393px] bg-[linear-gradient(to_bottom,#000_0%,#000503_6%,#002a15_20%,#007236_51%,#003a1c_72%,#001f12_86%,#000_98%)]" />
      <div className="flex flex-1 flex-col">
        <div className="h-[60px] bg-[linear-gradient(to_right,#006430,#004422_30%,#003018_45%,#001a0e_70%,#000_92%)]" />
        <div className="flex-1 bg-[linear-gradient(to_right,transparent_85%,#000_96%),linear-gradient(to_bottom,#010d02_86%,#000_98%)]" />
      </div>
    </div>
    <SlideArt />
    <section className={`relative mr-[34px] ml-[148px] flex flex-1 flex-col bg-[#ece9d8] text-[17px] text-black ${ui}`}>
      <TitleBar />
      <div className="bg-[linear-gradient(to_right,#f8f8f8,#f3f2ef_35%,#edebdc_75%,#ece9d8)]">
        <MenuBar />
        <Toolbar />
        <AddressBar />
        <YahooBar />
        <TabBar />
      </div>
      <Page />
      <StatusBar />
      <TaskBar />
    </section>
    <div className="relative flex h-[188px] items-end justify-between pr-[176px] pb-7 pl-[175px] font-['Liberation_Serif',serif] text-[39px] leading-[44px] text-white">
      <span>Paper AC-I</span>
      <span>112</span>
    </div>
  </div>
);

export default App;
